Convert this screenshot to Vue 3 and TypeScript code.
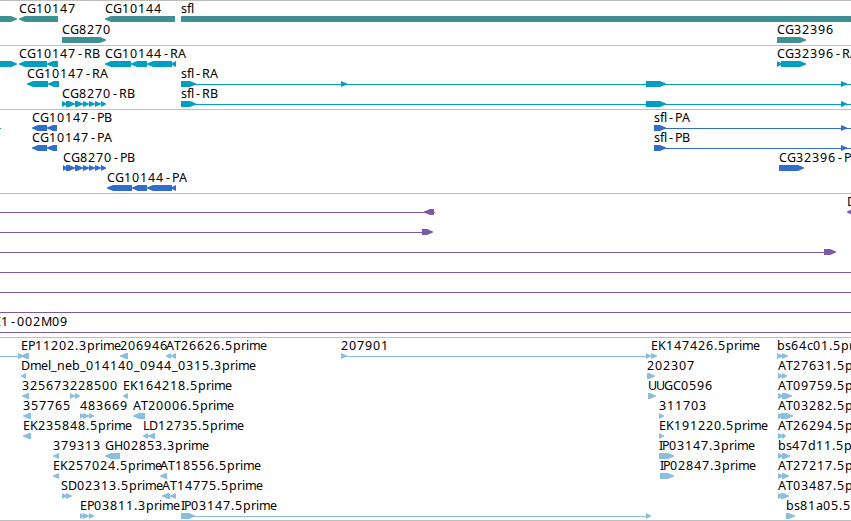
<script setup lang="ts">
interface Feature {
  x: number
  label?: string
  // [start, end] of every block, drawn as arrows along the strand
  exons?: [number, number][]
  reverse?: boolean
  blunt?: boolean
  line?: [number, number]
}

interface Track {
  name: string
  height: number
  pitch: number
  rows: Feature[][]
}

const VIEW_WIDTH = 851
const BAR_TOP = 15
const BAR_HEIGHT = 6
const HEAD = 6

// whole pixel advances, anything not listed is 8 wide
const advances: Record<string, number> = {
  '.': 4, _: 6, G: 9, D: 9, H: 9, M: 11, E: 7, P: 7, B: 7, T: 7, S: 7, L: 6, I: 3,
  a: 7, c: 6, e: 7, f: 4, i: 3, l: 3, m: 11, r: 5, s: 6
}

const glyphPositions = (label: string, start: number) => {
  let x = start
  return [...label].map((ch) => {
    // the hyphen is narrower than its cell, so centre it
    const at = ch === '-' ? x + 2 : x
    x += advances[ch] ?? 8
    return at
  }).join(' ')
}

const arrow = (start: number, end: number, top: number, reverse = false, blunt = false) => {
  const bottom = top + BAR_HEIGHT
  const mid = top + BAR_HEIGHT / 2
  if (blunt) return `${start},${top} ${end},${top} ${end},${bottom} ${start},${bottom}`
  const head = Math.min(HEAD, end - start)
  if (reverse) {
    const neck = start + head
    return `${end},${top} ${neck},${top} ${start},${mid - 0.5} ${start},${mid + 0.5} ${neck},${bottom} ${end},${bottom}`
  }
  const neck = end - head
  return `${start},${top} ${neck},${top} ${end},${mid - 0.5} ${end},${mid + 0.5} ${neck},${bottom} ${start},${bottom}`
}

const tracks: Track[] = [
  {
    name: 'gene',
    height: 44,
    pitch: 21,
    rows: [
      [
        { x: -20, exons: [[-20, 17]] },
        { x: 19, label: 'CG10147', exons: [[19, 58]], reverse: true },
        { x: 105, label: 'CG10144', exons: [[105, 175]], reverse: true },
        { x: 181, label: 'sfl', exons: [[181, 860]], blunt: true }
      ],
      [
        { x: 62, label: 'CG8270', exons: [[62, 106]] },
        { x: 777, label: 'CG32396', exons: [[777, 806]] }
      ]
    ]
  },
  {
    name: 'transcript',
    height: 63,
    pitch: 20,
    rows: [
      [
        { x: -20, exons: [[-20, 17]] },
        { x: 19, label: 'CG10147-RB', exons: [[19, 47], [47, 58]], reverse: true },
        { x: 105, label: 'CG10144-RA', exons: [[105, 131], [131, 147], [147, 172], [171, 176]], reverse: true },
        { x: 777, label: 'CG32396-RA', exons: [[777, 782], [781, 806]] }
      ],
      [
        { x: 27, label: 'CG10147-RA', exons: [[27, 48], [48, 59]], reverse: true },
        { x: 181, label: 'sfl-RA', exons: [[181, 196], [341, 347], [646, 666], [841, 847]], line: [181, 851] }
      ],
      [
        { x: 62, label: 'CG8270-RB', exons: [[62, 67], [66, 75], [75, 83], [83, 89], [89, 95], [95, 101], [101, 106]] },
        { x: 181, label: 'sfl-RB', exons: [[181, 196], [646, 666], [841, 847]], line: [181, 851] }
      ]
    ]
  },
  {
    name: 'protein',
    height: 83,
    pitch: 20,
    rows: [
      [
        { x: 0, line: [0, 1] },
        { x: 32, label: 'CG10147-PB', exons: [[32, 47], [47, 57]], reverse: true },
        { x: 654, label: 'sfl-PA', exons: [[654, 666], [841, 847]], line: [654, 851] }
      ],
      [
        { x: 32, label: 'CG10147-PA', exons: [[32, 47], [47, 57]], reverse: true },
        { x: 654, label: 'sfl-PB', exons: [[654, 666], [841, 847]], line: [654, 851] }
      ],
      [
        { x: 63, label: 'CG8270-PB', exons: [[63, 67], [66, 75], [75, 83], [83, 89], [89, 95], [95, 101], [101, 106]] },
        { x: 779, label: 'CG32396-PA', exons: [[779, 804]] }
      ],
      [
        { x: 107, label: 'CG10144-PA', exons: [[107, 132], [132, 147], [147, 172], [171, 176]], reverse: true }
      ]
    ]
  },
  {
    name: 'insertion',
    height: 143,
    pitch: 20,
    rows: [
      [
        { x: 0, exons: [[424, 434]], reverse: true, line: [0, 435] },
        { x: 847, label: 'D', exons: [[847, 860]], reverse: true }
      ],
      [{ x: 0, exons: [[422, 433]], line: [0, 424] }],
      [{ x: 0, exons: [[824, 836]], line: [0, 826] }],
      [{ x: 0, line: [0, 851] }],
      [{ x: 0, line: [0, 851] }],
      [{ x: 0, line: [0, 851] }],
      [{ x: -6, label: 'E1-002M09', line: [0, 851] }]
    ]
  },
  {
    name: 'est',
    height: 182,
    pitch: 20,
    rows: [
      [
        { x: 0, exons: [[18, 24]], line: [0, 19] },
        { x: 21, label: 'EP11202.3prime', exons: [[21, 29]], reverse: true },
        { x: 120, label: '206946', exons: [[120, 128]], reverse: true },
        { x: 166, label: 'AT26626.5prime', exons: [[166, 171], [171, 176]], reverse: true },
        { x: 341, label: '207901', exons: [[341, 347], [646, 651]], line: [341, 647] },
        { x: 651, label: 'EK147426.5prime', exons: [[651, 657]] },
        { x: 777, label: 'bs64c01.5prime', exons: [[777, 783], [782, 788]] }
      ],
      [
        { x: 21, label: 'Dmel_neb_014140_0944_0315.3prime', exons: [[21, 26]], reverse: true },
        { x: 647, label: '202307', exons: [[647, 655]] },
        { x: 778, label: 'AT27631.5prime', exons: [[778, 783], [782, 787]] }
      ],
      [
        { x: 22, label: '325673', exons: [[22, 29]], reverse: true },
        { x: 70, label: '228500', exons: [[70, 75], [75, 80]] },
        { x: 123, label: 'EK164218.5prime', exons: [[123, 128]], reverse: true },
        { x: 648, label: 'UUGC0596', exons: [[648, 656]] },
        { x: 778, label: 'AT09759.5prime', exons: [[778, 783], [782, 792]] }
      ],
      [
        { x: 23, label: '357765', exons: [[23, 31]], reverse: true },
        { x: 80, label: '483669', exons: [[80, 84], [83, 89], [89, 94]] },
        { x: 133, label: 'AT20006.5prime', exons: [[133, 145]], reverse: true },
        { x: 659, label: '311703', exons: [[659, 664]] },
        { x: 778, label: 'AT03282.5prime', exons: [[778, 783], [781, 793]] }
      ],
      [
        { x: 23, label: 'EK235848.5prime', exons: [[23, 31]], reverse: true },
        { x: 143, label: 'LD12735.5prime', exons: [[143, 148], [148, 155]], reverse: true },
        { x: 659, label: 'EK191220.5prime', exons: [[659, 664]] },
        { x: 778, label: 'AT26294.5prime', exons: [[778, 783], [782, 786]] }
      ],
      [
        { x: 53, label: '379313', exons: [[53, 59]], reverse: true },
        { x: 105, label: 'GH02853.3prime', exons: [[105, 120]], reverse: true },
        { x: 659, label: 'IP03147.3prime', exons: [[659, 674]] },
        { x: 778, label: 'bs47d11.5prime', exons: [[778, 783], [782, 790]] }
      ],
      [
        { x: 53, label: 'EK257024.5prime', exons: [[53, 59]], reverse: true },
        { x: 160, label: 'AT18556.5prime', exons: [[160, 167]], reverse: true },
        { x: 660, label: 'IP02847.3prime', exons: [[660, 674]] },
        { x: 778, label: 'AT27217.5prime', exons: [[778, 783], [782, 789]] }
      ],
      [
        { x: 61, label: 'SD02313.5prime', exons: [[62, 67], [66, 72]] },
        { x: 162, label: 'AT14775.5prime', exons: [[162, 170], [170, 176]], reverse: true },
        { x: 778, label: 'AT03487.5prime', exons: [[778, 783], [781, 789]] }
      ],
      [
        { x: 80, label: 'EP03811.3prime', exons: [[80, 84], [83, 89], [89, 94]] },
        { x: 181, label: 'IP03147.5prime', exons: [[181, 195], [646, 651]], line: [181, 647] },
        { x: 786, label: 'bs81a05.5prime', exons: [[786, 795]] }
      ]
    ]
  }
]
</script>

<template>
  <main class="browser">
    <section
      v-for="track in tracks"
      :key="track.name"
      class="track"
      :class="`track--${track.name}`"
    >
      <svg class="track-canvas" :width="VIEW_WIDTH" :height="track.height">
        <g
          v-for="(row, r) in track.rows"
          :key="r"
          :transform="`translate(0 ${r * track.pitch})`"
        >
          <g v-for="(feature, f) in row" :key="f">
            <rect
              v-if="feature.line"
              class="feature"
              :x="feature.line[0]"
              :y="BAR_TOP + 3"
              :width="feature.line[1] - feature.line[0]"
              height="1"
            />
            <polygon
              v-for="exon in feature.exons"
              :key="exon[0]"
              class="feature"
              :points="arrow(exon[0], exon[1], BAR_TOP, feature.reverse, feature.blunt)"
            />
            <text
              v-if="feature.label"
              class="label"
              :x="glyphPositions(feature.label, feature.x)"
              :y="BAR_TOP - 3"
            >{{ feature.label }}</text>
          </g>
        </g>
      </svg>
    </section>
  </main>
</template>

<style>
body {
  margin: 0;
  background: #fff;
}
</style>

<style scoped>
.browser {
  width: 851px;
  overflow: hidden;
  background: #fff;
}

.track {
  border-top: 1px solid #bebebe;
}

.track:last-child {
  border-bottom: 1px solid #bebebe;
}

.track-canvas {
  display: block;
}

.track--gene { --feature: #3f9095; }
.track--transcript { --feature: #009fc0; }
.track--protein { --feature: #316ecb; }
.track--insertion { --feature: #7a5aa8; }
.track--est { --feature: #8abede; }

.feature {
  fill: var(--feature);
}

.label {
  font-family: "Noto Sans", "Open Sans", sans-serif;
  font-size: 12.5px;
  fill: #000;
}
</style>
